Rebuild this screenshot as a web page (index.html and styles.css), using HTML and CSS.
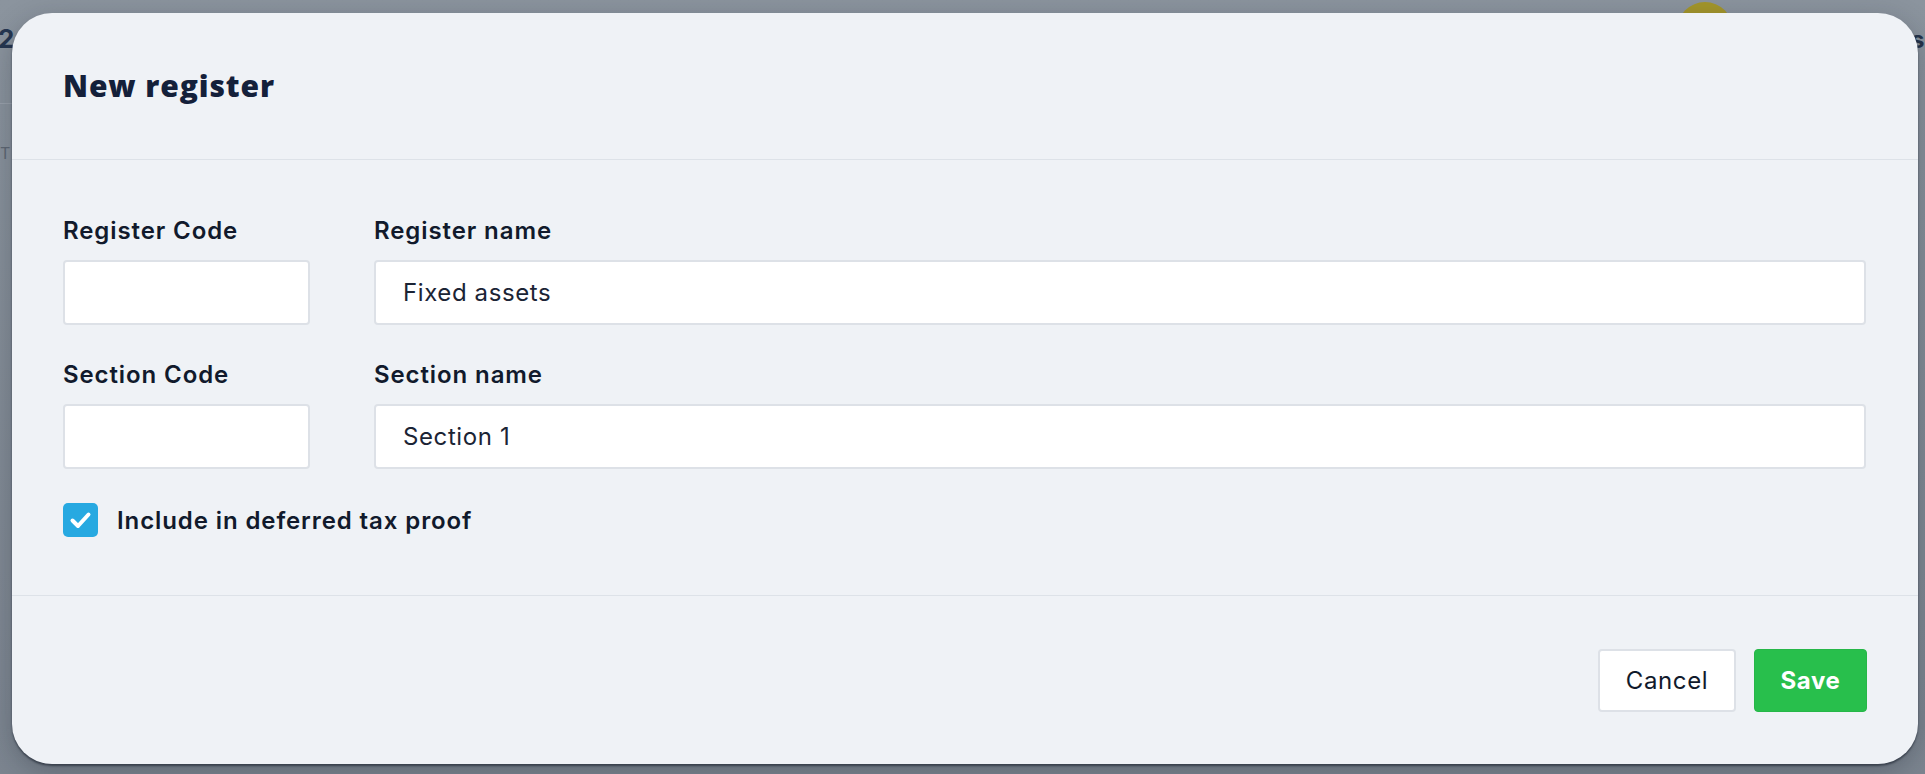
FILE: index.html
```html
<!DOCTYPE html>
<html lang="en">
<head>
<meta charset="utf-8">
<title>New register</title>
<link rel="stylesheet" href="styles.css">
</head>
<body>
<div class="page">
  <div class="page-num">2</div>
  <div class="page-rule"></div>
  <div class="page-t">T</div>
  <div class="avatar"></div>
  <div class="page-s">s</div>
</div>
<div class="backdrop">
  <div class="modal" role="dialog" aria-labelledby="modal-title">
    <div class="modal-header">
      <h2 class="modal-title" id="modal-title">New register</h2>
    </div>
    <div class="modal-body">
      <div class="form-grid">
        <div class="field">
          <label class="field-label" for="reg-code">Register Code</label>
          <input class="field-input" id="reg-code" type="text" value="">
        </div>
        <div class="field">
          <label class="field-label" for="reg-name">Register name</label>
          <input class="field-input" id="reg-name" type="text" value="Fixed assets">
        </div>
        <div class="field">
          <label class="field-label" for="sec-code">Section Code</label>
          <input class="field-input" id="sec-code" type="text" value="">
        </div>
        <div class="field">
          <label class="field-label" for="sec-name">Section name</label>
          <input class="field-input" id="sec-name" type="text" value="Section 1">
        </div>
      </div>
      <label class="check-row">
        <span class="checkbox">
          <svg viewBox="0 0 35 34" width="35" height="34" aria-hidden="true">
            <path d="M9.5 17.5 L15 23 L25.5 11.5" fill="none" stroke="#ffffff" stroke-width="4" stroke-linecap="round" stroke-linejoin="round"/>
          </svg>
        </span>
        <span class="check-label">Include in deferred tax proof</span>
      </label>
    </div>
    <div class="modal-footer">
      <button class="btn btn-cancel" type="button">Cancel</button>
      <button class="btn btn-save" type="button">Save</button>
    </div>
  </div>
</div>
</body>
</html>
```
FILE: styles.css
```css
* { box-sizing: border-box; }

html, body {
  margin: 0;
  padding: 0;
  width: 1925px;
  height: 774px;
  overflow: hidden;
}

body {
  background: #8a939d;
  font-family: Inter, "Noto Sans", "Liberation Sans", sans-serif;
  color: #111a2c;
  position: relative;
}

/* page underneath the dialog (dimmed) */
.page {
  position: absolute;
  inset: 0;
  background: linear-gradient(#8b949e, #7c8590);
}
.page-num {
  position: absolute;
  left: -2px;
  top: 24px;
  font: 700 26px/30px Inter, sans-serif;
  color: #253650;
}
.page-rule {
  position: absolute;
  left: 0;
  top: 103px;
  width: 14px;
  height: 1px;
  background: #99a1ab;
}
.page-t {
  position: absolute;
  left: 0;
  top: 144px;
  font: 400 16px/18px Inter, sans-serif;
  color: #5e6773;
}
.avatar {
  position: absolute;
  left: 1677px;
  top: 2px;
  width: 56px;
  height: 56px;
  border-radius: 50%;
  background: #a4962b;
}
.page-s {
  position: absolute;
  left: 1911px;
  top: 26px;
  font: 700 24px/28px Inter, sans-serif;
  color: #24334a;
}

.backdrop {
  position: absolute;
  inset: 0;
}

.modal {
  position: absolute;
  left: 12px;
  top: 13px;
  width: 1906px;
  height: 751px;
  background: #eff2f6;
  border-radius: 40px;
  display: flex;
  flex-direction: column;
  box-shadow: 0 2px 2px rgba(20, 28, 40, 0.55), 0 8px 28px rgba(20, 28, 40, 0.28);
  overflow: hidden;
}

.modal-header {
  height: 147px;
  flex: 0 0 auto;
  border-bottom: 1px solid #dde2e8;
  display: flex;
  align-items: center;
  padding: 0 51px;
}

.modal-title {
  margin: 0;
  font-family: "Open Sans", Inter, sans-serif;
  font-weight: 800;
  font-size: 30px;
  line-height: 36px;
  color: #14203a;
  letter-spacing: 0.9px;
}

.modal-body {
  flex: 1 1 auto;
  padding: 57px 52px 0 51px;
}

.form-grid {
  display: grid;
  grid-template-columns: 247px 1fr;
  column-gap: 64px;
  row-gap: 36px;
}

.field {
  display: flex;
  flex-direction: column;
}

.field-label {
  font-size: 24px;
  line-height: 27px;
  font-weight: 600;
  letter-spacing: 0.9px;
  color: #111a2c;
  margin-bottom: 16px;
}

.field-input {
  height: 65px;
  width: 100%;
  border: 2px solid #dde1e7;
  border-radius: 4px;
  background: #ffffff;
  padding: 0 27px;
  font-family: Inter, "Noto Sans", sans-serif;
  font-size: 24px;
  font-weight: 400;
  letter-spacing: 0.6px;
  color: #1b2435;
  outline: none;
}

.check-row {
  display: flex;
  align-items: center;
  gap: 19px;
  margin-top: 34px;
  cursor: pointer;
}

.checkbox {
  width: 35px;
  height: 34px;
  border-radius: 5px;
  background: #27a9e1;
  display: flex;
  flex: 0 0 auto;
}

.check-label {
  font-size: 24px;
  line-height: 27px;
  font-weight: 600;
  letter-spacing: 0.9px;
  color: #111a2c;
}

.modal-footer {
  height: 169px;
  flex: 0 0 auto;
  border-top: 1px solid #dde2e8;
  display: flex;
  justify-content: flex-end;
  align-items: center;
  gap: 18px;
  padding: 0 51px;
}

.btn {
  height: 63px;
  border-radius: 4px;
  font-family: Inter, "Noto Sans", sans-serif;
  font-size: 24px;
  letter-spacing: 0.6px;
  cursor: pointer;
  display: flex;
  align-items: center;
  justify-content: center;
  padding: 0;
}

.btn-cancel {
  width: 138px;
  background: #ffffff;
  border: 2px solid #dde1e7;
  color: #111a2c;
  font-weight: 400;
}

.btn-save {
  width: 113px;
  background: #28bf4c;
  border: 1px solid #26b748;
  color: #ffffff;
  font-weight: 700;
}
```
